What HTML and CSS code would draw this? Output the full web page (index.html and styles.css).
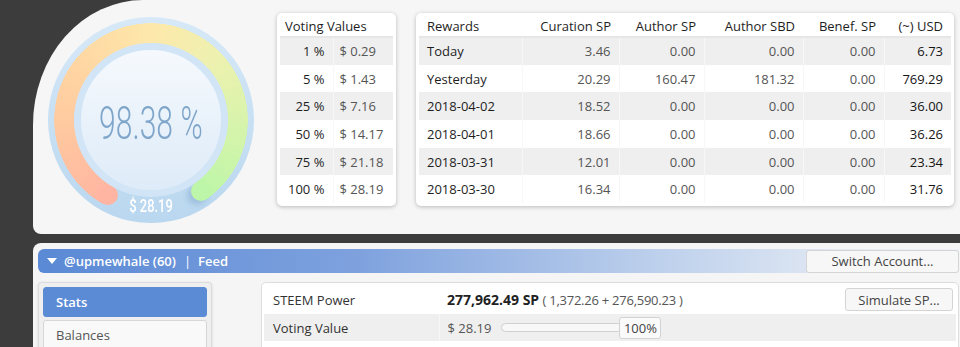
FILE: index.html
```html
<!DOCTYPE html>
<html lang="en">
<head>
  <meta charset="UTF-8">
  <title>steem stats - upmewhale</title>
  <link rel="stylesheet" href="styles.css">
</head>
<body>
  <div class="top-panel">
    <!-- gauge of voting power -->
    <div class="gauge">
      <div class="gauge-arc"></div>
      <div class="gauge-cap cap-start"></div>
      <div class="gauge-cap cap-end"></div>
      <div class="gauge-face">
        <span class="gauge-value">98.38 %</span>
      </div>
      <span class="gauge-money">$ 28.19</span>
    </div>

    <div class="card voting">
      <table class="grid">
        <tr><th colspan="2">Voting Values</th></tr>
        <tr><td class="pct">1 %</td><td class="usd">$ 0.29</td></tr>
        <tr><td class="pct">5 %</td><td class="usd">$ 1.43</td></tr>
        <tr><td class="pct">25 %</td><td class="usd">$ 7.16</td></tr>
        <tr><td class="pct">50 %</td><td class="usd">$ 14.17</td></tr>
        <tr><td class="pct">75 %</td><td class="usd">$ 21.18</td></tr>
        <tr><td class="pct">100 %</td><td class="usd">$ 28.19</td></tr>
      </table>
    </div>

    <div class="card rewards">
      <table class="grid">
        <tr>
          <th class="c1">Rewards</th>
          <th class="num c2">Curation SP</th>
          <th class="num c3">Author SP</th>
          <th class="num c4">Author SBD</th>
          <th class="num c5">Benef. SP</th>
          <th class="num c6">(~) USD</th>
        </tr>
        <tr><td>Today</td><td class="num">3.46</td><td class="num">0.00</td><td class="num">0.00</td><td class="num">0.00</td><td class="num total">6.73</td></tr>
        <tr><td>Yesterday</td><td class="num">20.29</td><td class="num">160.47</td><td class="num">181.32</td><td class="num">0.00</td><td class="num total">769.29</td></tr>
        <tr><td>2018-04-02</td><td class="num">18.52</td><td class="num">0.00</td><td class="num">0.00</td><td class="num">0.00</td><td class="num total">36.00</td></tr>
        <tr><td>2018-04-01</td><td class="num">18.66</td><td class="num">0.00</td><td class="num">0.00</td><td class="num">0.00</td><td class="num total">36.26</td></tr>
        <tr><td>2018-03-31</td><td class="num">12.01</td><td class="num">0.00</td><td class="num">0.00</td><td class="num">0.00</td><td class="num total">23.34</td></tr>
        <tr><td>2018-03-30</td><td class="num">16.34</td><td class="num">0.00</td><td class="num">0.00</td><td class="num">0.00</td><td class="num total">31.76</td></tr>
      </table>
    </div>
  </div>

  <div class="account-panel">
    <div class="account-bar">
      <span class="caret"></span>
      <span class="account-name">@upmewhale (60)</span>
      <span class="sep">|</span>
      <span>Feed</span>
      <button class="btn switch">Switch Account...</button>
    </div>

    <div class="account-body">
      <ul class="side-nav">
        <li class="nav-item active">Stats</li>
        <li class="nav-item">Balances</li>
      </ul>

      <div class="stats-card">
        <table class="stats">
          <tr class="row-sp">
            <td class="label">STEEM Power</td>
            <td class="value">
              <div class="value-line">
                <b>277,962.49 SP</b>&nbsp;<span class="muted tight">( 1,372.26 + 276,590.23 )</span>
                <button class="btn simulate">Simulate SP...</button>
              </div>
            </td>
          </tr>
          <tr class="row-vote">
            <td class="label">Voting Value</td>
            <td class="value">
              <div class="value-line">
                <span class="muted">$ 28.19</span>
                <div class="slider"></div>
                <span class="pct-box">100%</span>
              </div>
            </td>
          </tr>
        </table>
      </div>
    </div>
  </div>
</body>
</html>
```

FILE: styles.css
```css
* {
  margin: 0;
  padding: 0;
  box-sizing: border-box;
  list-style: none;
}

body {
  background: #3c3c3c;
  font-family: "Open Sans", Arial, sans-serif;
  font-size: 13px;
  color: #1e1e1e;
  overflow: hidden;
}

/* top block */
.top-panel {
  display: flex;
  align-items: flex-start;
  margin-left: 33px;
  width: 940px;
  height: 234px;
  padding: 13px 0 0 15px;
  background: #f6f6f6;
  border-radius: 110px 0 0 8px / 125px 0 0 8px;
}

.gauge {
  position: relative;
  width: 206px;
  height: 206px;
  margin-top: 4px;
  border-radius: 50%;
  background: linear-gradient(#d7e9f8, #b9d7ef);
  flex-shrink: 0;
}
.gauge-arc {
  position: absolute;
  inset: 0;
  border-radius: 50%;
  background: conic-gradient(from 210deg,
    #ffb5a2 0deg,
    #ffc79f 50deg,
    #ffd7a3 100deg,
    #fde8aa 150deg,
    #eef1b0 195deg,
    #d6f4ab 245deg,
    #bdf6a8 295deg,
    transparent 295deg);
  -webkit-mask: radial-gradient(circle, transparent 76.5px, #000 77px, #000 96.5px, transparent 97px);
  mask: radial-gradient(circle, transparent 76.5px, #000 77px, #000 96.5px, transparent 97px);
}
.gauge-cap {
  position: absolute;
  width: 20px;
  height: 20px;
  border-radius: 50%;
}
.cap-start {
  left: 49.5px;
  top: 168.3px;
  background: #ffb5a2;
}
.cap-end {
  left: 143px;
  top: 164.3px;
  background: #bdf6a8;
  box-shadow: -4px 4px 5px rgba(110, 150, 190, 0.35);
}
.gauge-face {
  position: absolute;
  inset: 26px;
  display: flex;
  align-items: center;
  justify-content: center;
  border-radius: 50%;
  border: 7px solid #d2e5f6;
  background: linear-gradient(#f5f9fd, #deebf8);
}
.gauge-value {
  display: inline-block;
  margin-top: 4px;
  font-family: Roboto, sans-serif;
  font-weight: 300;
  font-size: 47px;
  color: #7fa6ca;
  transform: scaleX(0.64);
  white-space: nowrap;
}
.gauge-money {
  position: absolute;
  left: 0;
  right: 0;
  bottom: 6px;
  text-align: center;
  font-family: Roboto, sans-serif;
  font-weight: 500;
  font-size: 19px;
  color: #fff;
  transform: scaleX(0.68);
  white-space: nowrap;
}

.card {
  background: #fff;
  padding: 3px;
  border-radius: 5px;
  box-shadow: 0 1px 4px rgba(0, 0, 0, 0.25);
}
.voting {
  width: 119px;
  margin-left: 23px;
}
.rewards {
  width: 538px;
  margin-left: 20px;
}

.grid {
  width: 100%;
  border-collapse: collapse;
}
.grid th {
  height: 21px;
  padding: 0 8px;
  font-weight: normal;
  text-align: left;
  border-bottom: 2px solid #e6e6e6;
  white-space: nowrap;
}
.voting .grid th {
  padding-left: 5px;
}
.grid td {
  height: 27.7px;
  padding: 0 8px;
  border-left: 1px solid #f7f7f7;
  white-space: nowrap;
}
.grid td:first-child {
  border-left: 0;
}
.grid tr:nth-child(even) td {
  background: #efefef;
}
.grid .num {
  text-align: right;
  color: #555;
}
.grid th.num {
  color: #1e1e1e;
}
.grid .total {
  color: #151515;
}

.pct {
  width: 53px;
  text-align: right;
  padding-right: 9px !important;
}
.usd {
  padding-left: 5px !important;
  color: #555;
}

.c1 { width: 103px; }
.c2 { width: 97px; }
.c3 { width: 85px; }
.c4 { width: 99px; }
.c5 { width: 81px; }

/* account block */
.account-panel {
  margin: 9px 0 0 33px;
  height: 110px;
  padding: 6px 1px 0 5px;
  background: #f5f5f5;
  border-radius: 8px 0 0 0;
}
.account-bar {
  display: flex;
  align-items: center;
  height: 24px;
  padding-left: 9px;
  border-radius: 6px 0 0 6px;
  background: linear-gradient(90deg, #5a89d5 0%, #7fa2de 35%, #b9cdeb 65%, #e6ecf5 90%, #eef1f5 100%);
  color: #fff;
  font-size: 13px;
  font-weight: 600;
}
.caret {
  width: 0;
  height: 0;
  margin-right: 7px;
  border-left: 5px solid transparent;
  border-right: 5px solid transparent;
  border-top: 6px solid #fff;
}
.sep {
  margin: 0 7px 0 8px;
  font-weight: normal;
}

.btn {
  font-family: "Open Sans", Arial, sans-serif;
  font-size: 13px;
  color: #444;
  background: #f7f7f7;
  border: 1px solid #d4d4d4;
  border-radius: 3px;
}
.switch {
  margin-left: auto;
  width: 153px;
  height: 23px;
}

.account-body {
  display: flex;
  gap: 49px;
  margin-top: 9px;
}
.side-nav {
  width: 174px;
  height: 80px;
  padding: 4px;
  background: #efefef;
  border: 1px solid #dcdcdc;
  border-radius: 3px;
  box-shadow: 0 1px 3px rgba(0, 0, 0, 0.12);
}
.nav-item {
  height: 30px;
  margin-bottom: 3px;
  padding: 5px 12px;
  font-size: 13px;
  color: #555;
  background: #f9f9f9;
  border: 1px solid #d6d6d6;
  border-radius: 3px;
}
.nav-item.active {
  background: #5c8bd6;
  border-color: #5c8bd6;
  color: #fff;
  font-weight: 600;
}

.stats-card {
  flex: 1;
  height: 80px;
  padding: 2px;
  background: #fff;
  border: 1px solid #dddddd;
  border-radius: 5px;
}
.stats {
  width: 100%;
  border-collapse: collapse;
}
.stats td {
  padding: 0 8px;
}
.stats td.value {
  padding-right: 0;
}
.stats .label {
  width: 175px;
  padding-left: 9px;
  color: #333;
}
.row-sp td {
  height: 29px;
}
.row-vote td {
  height: 27px;
  background: #efefef;
}
.row-vote .label {
  border-right: 1px solid #f7f7f7;
}
.value-line {
  display: flex;
  align-items: center;
}
.value-line b {
  font-size: 14px;
  font-weight: 700;
  color: #222;
}
.muted {
  color: #555;
}
.tight {
  letter-spacing: -0.25px;
}
.simulate {
  margin-left: auto;
  margin-right: 3px;
  width: 108px;
  height: 23px;
}
.slider {
  width: 121px;
  height: 9px;
  margin-left: 10px;
  background: #f8f8f8;
  border: 1px solid #cfcfcf;
  border-radius: 5px;
}
.pct-box {
  width: 42px;
  height: 22px;
  margin-left: -3px;
  line-height: 20px;
  text-align: center;
  color: #444;
  background: #fafafa;
  border: 1px solid #d2d2d2;
  border-radius: 3px;
}
```
